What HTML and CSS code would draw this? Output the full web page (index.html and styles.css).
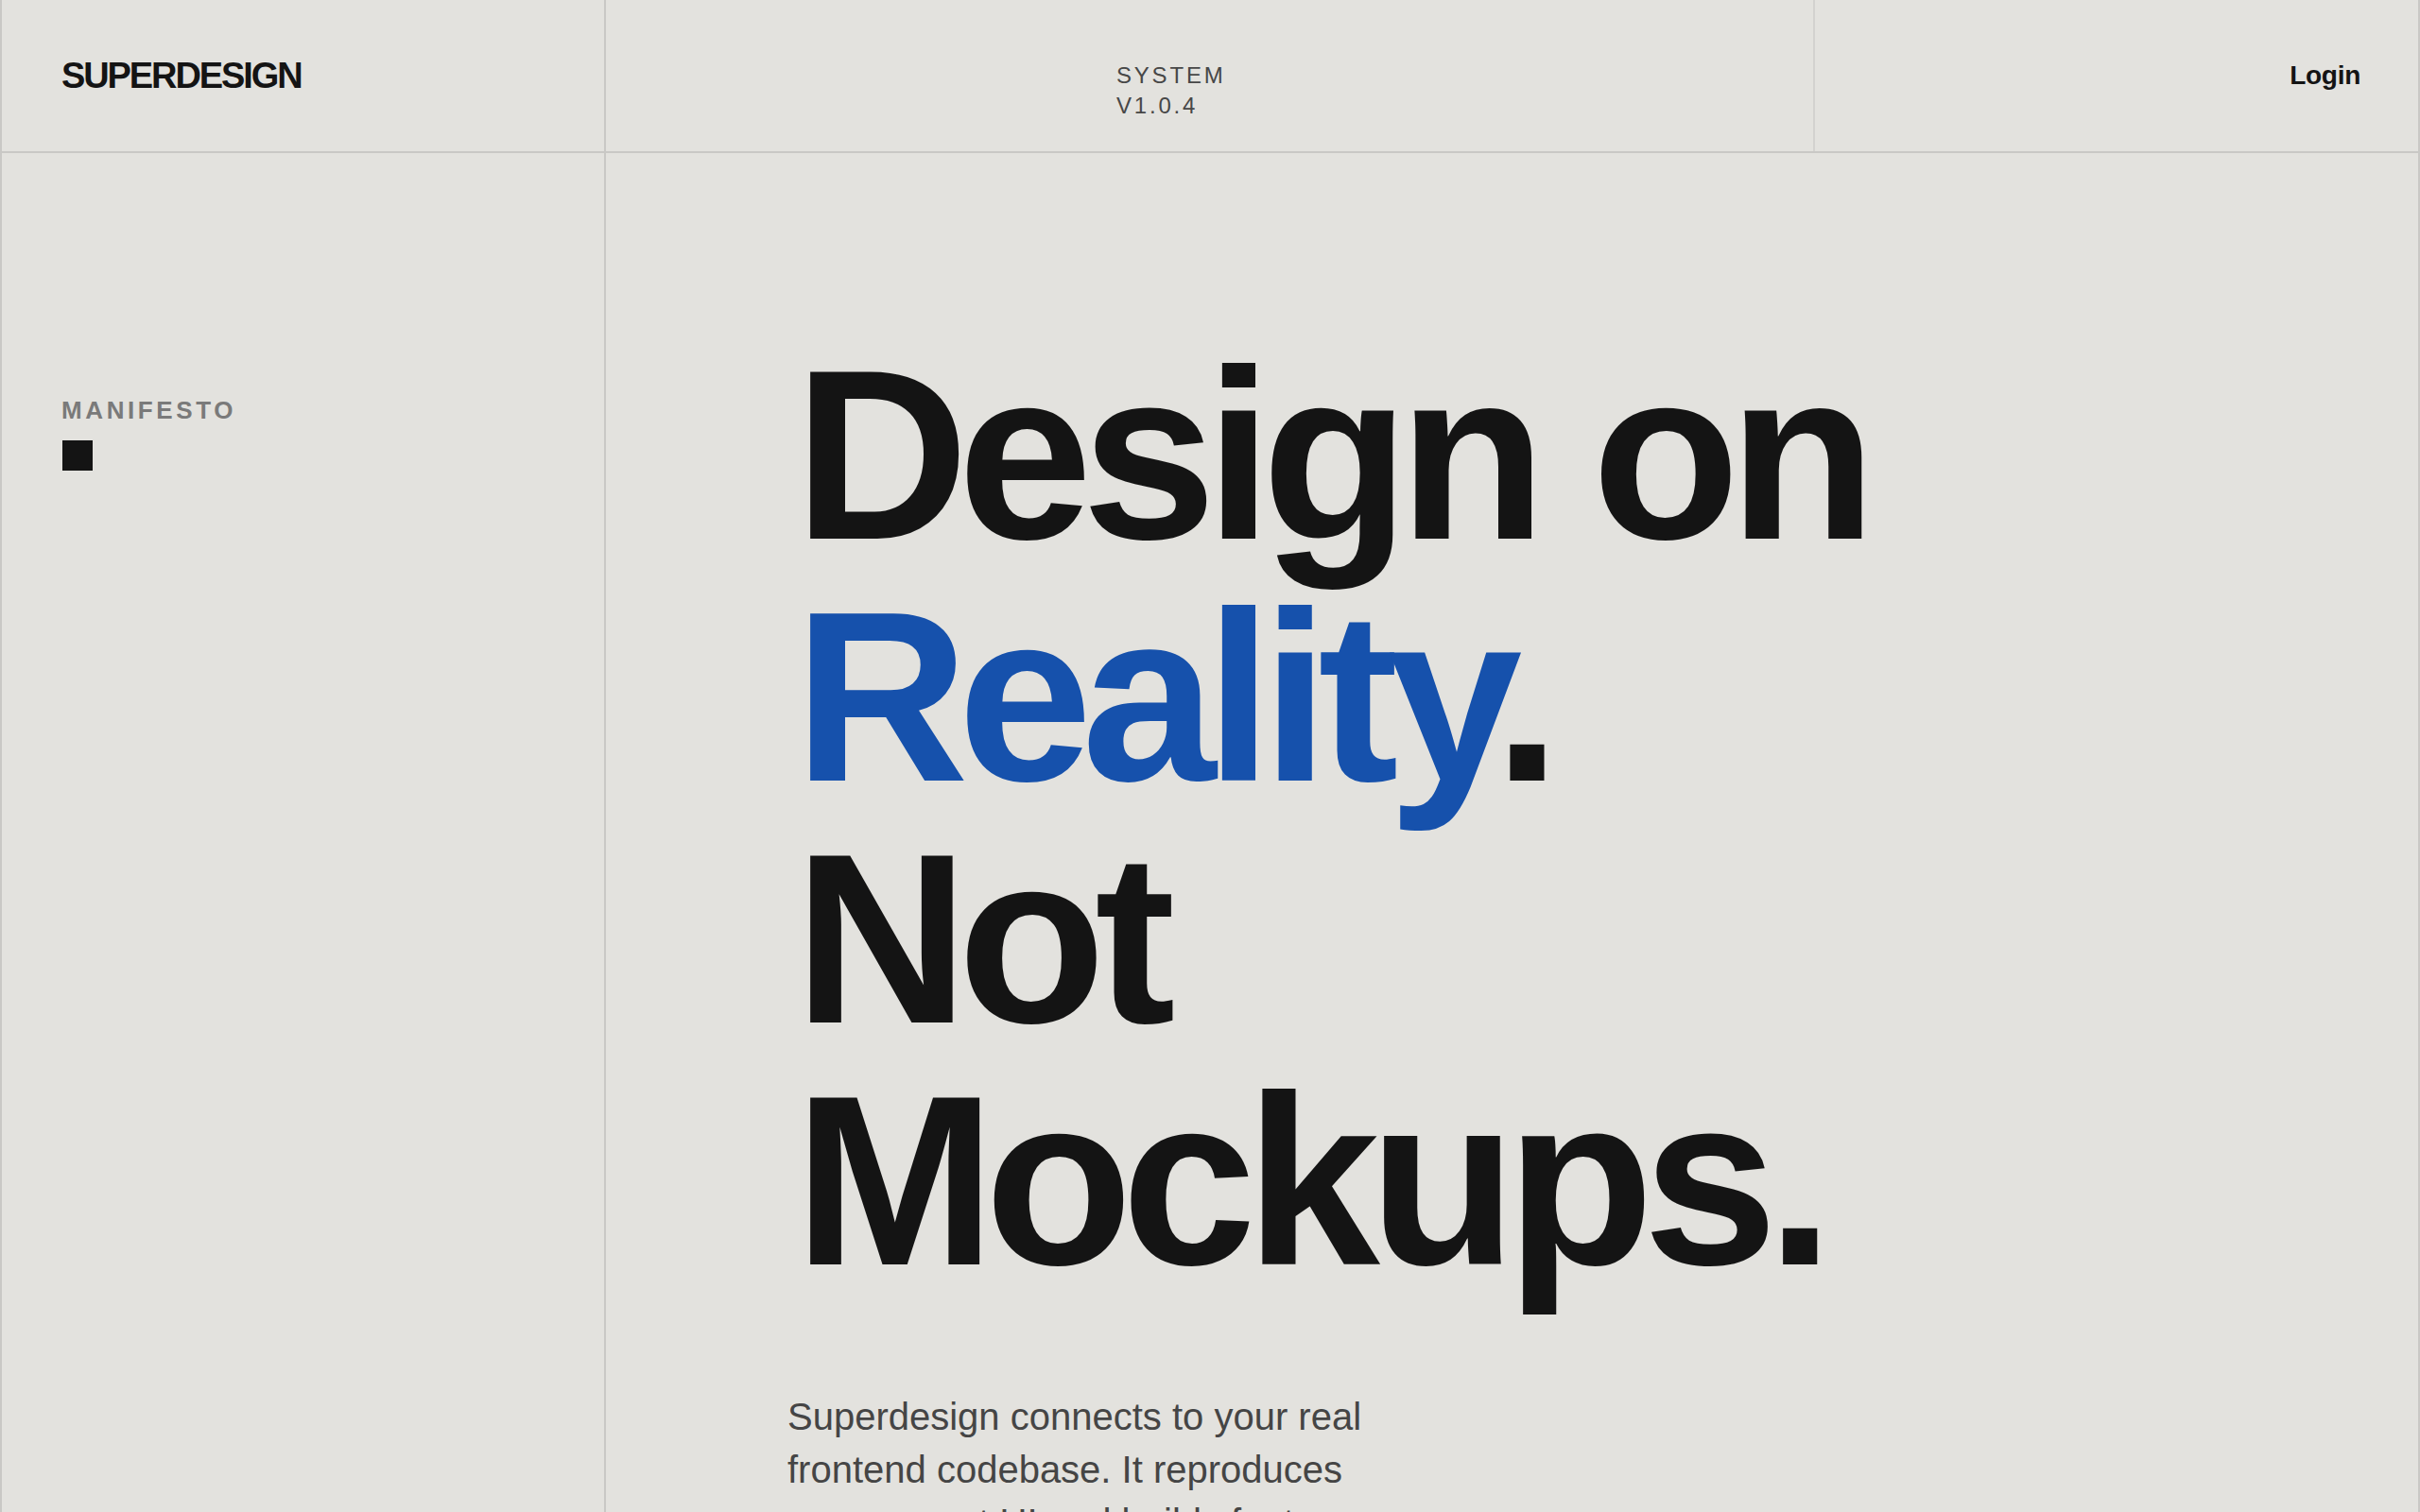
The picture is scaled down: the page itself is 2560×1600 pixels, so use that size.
FILE: index.html
```html
<!DOCTYPE html>
<html lang="en">
<head>
<meta charset="utf-8">
<title>Superdesign — Manifesto</title>
<link rel="stylesheet" href="styles.css">
</head>
<body>
<div class="page">
  <header class="topbar">
    <div class="cell brand">SUPERDESIGN</div>
    <div class="cell meta"><span>SYSTEM</span><span>V1.0.4</span></div>
    <div class="cell login"><a href="#" class="login-link">Login</a></div>
  </header>
  <div class="content">
    <aside class="sidebar">
      <div class="label">MANIFESTO</div>
      <div class="mark"></div>
    </aside>
    <main class="hero">
      <h1 class="headline">
        <span class="line">Design on</span>
        <span class="line"><span class="accent">Reality</span>.</span>
        <span class="line">Not</span>
        <span class="line">Mockups.</span>
      </h1>
      <p class="lede">Superdesign connects to your real frontend codebase. It reproduces your current UI and builds features faster than ever before.</p>
    </main>
  </div>
</div>
</body>
</html>
```
FILE: styles.css
```css
* { box-sizing: border-box; }

html, body {
  margin: 0;
  padding: 0;
  background: #e3e2de;
}

body {
  font-family: "Liberation Sans", Arial, Helvetica, sans-serif;
  color: #141414;
}

.page {
  min-height: 100vh;
  border-left: 2px solid #c9c8c5;
  border-right: 2px solid #c9c8c5;
}

/* ---------- top bar ---------- */
.topbar {
  display: grid;
  grid-template-columns: 639px 1fr 640px;
  height: 162px;
  border-bottom: 2px solid #c9c8c5;
}

.cell {
  display: flex;
  height: 160px;
}

.brand {
  align-items: center;
  padding-left: 63px;
  border-right: 2px solid #c9c8c5;
  font-size: 38px;
  font-weight: 700;
  letter-spacing: -0.055em;
  color: #141414;
}

.meta {
  flex-direction: column;
  padding-top: 64px;
  padding-left: 540px;
  font-size: 24px;
  line-height: 32px;
  letter-spacing: 2.8px;
  color: #474747;
}

.login {
  align-items: center;
  justify-content: flex-end;
  padding-right: 61px;
  border-left: 2px solid #d3d2cf;
}

.login-link {
  font-size: 28px;
  font-weight: 700;
  color: #141414;
  text-decoration: none;
  letter-spacing: -0.01em;
}

/* ---------- content ---------- */
.content {
  display: grid;
  grid-template-columns: 639px 1fr;
  min-height: calc(100vh - 162px);
}

.sidebar {
  border-right: 2px solid #c9c8c5;
  padding: 259px 0 0 63px;
}

.label {
  font-size: 26px;
  line-height: 26px;
  font-weight: 700;
  letter-spacing: 3.6px;
  color: #7a7a7a;
}

.mark {
  width: 32px;
  height: 32px;
  margin-top: 19px;
  margin-left: 1px;
  background: #141414;
}

.hero {
  padding: 191px 0 200px 192px;
}

.headline {
  margin: 0;
  padding-left: 7px;
  font-size: 256px;
  line-height: 256px;
  font-weight: 700;
  letter-spacing: -0.045em;
  color: #141414;
}

.line {
  display: block;
  white-space: nowrap;
}

.accent {
  color: #1651ac;
}

.lede {
  margin: 94px 0 0;
  max-width: 640px;
  font-size: 40px;
  line-height: 56px;
  color: #454545;
}
```
